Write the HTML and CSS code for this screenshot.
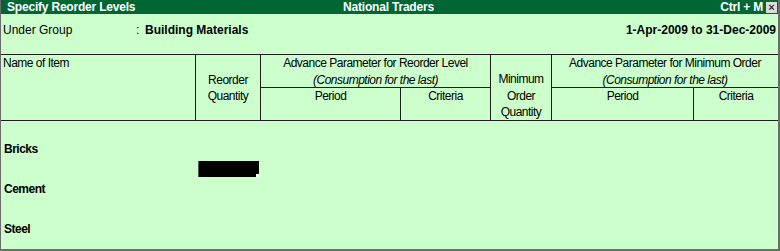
FILE: index.html
```html
<!DOCTYPE html>
<html>
<head>
<meta charset="utf-8">
<link rel="stylesheet" href="styles.css">
</head>
<body>
<div class="win">
  <div class="titlebar">
    <div class="t-left">Specify Reorder Levels</div>
    <div class="t-mid">National Traders</div>
    <div class="t-right"><span class="hotkey">Ctrl + M</span><span class="close">&#215;</span></div>
  </div>
  <div class="info">
    <div class="grp"><span class="lbl">Under Group</span><span class="colon">:</span><span class="val">Building Materials</span></div>
    <div class="period">1-Apr-2009 to 31-Dec-2009</div>
  </div>
  <div class="head">
    <div class="c name">Name of Item</div>
    <div class="c rq">Reorder<br>Quantity</div>
    <div class="c adv1">Advance Parameter for Reorder Level<br><i>(Consumption for the last)</i></div>
    <div class="c p1">Period</div>
    <div class="c cr1">Criteria</div>
    <div class="c moq">Minimum<br>Order<br>Quantity</div>
    <div class="c adv2">Advance Parameter for Minimum Order<br><i>(Consumption for the last)</i></div>
    <div class="c p2">Period</div>
    <div class="c cr2">Criteria</div>
  </div>
  <div class="body">
    <div class="item">
      <div class="iname">Bricks</div>
      <div class="fields"><div class="f-qty"><span class="field active"><span class="cursor"></span></span></div></div>
    </div>
    <div class="item">
      <div class="iname">Cement</div>
      <div class="fields"></div>
    </div>
    <div class="item">
      <div class="iname">Steel</div>
      <div class="fields"></div>
    </div>
  </div>
</div>
</body>
</html>
```
FILE: styles.css
```css
html, body {
  margin: 0;
  padding: 0;
  background: #ccffcc;
}
.win {
  width: 780px;
  height: 251px;
  box-sizing: border-box;
  border-left: 1px solid #6b6b6b;
  border-right: 2px solid #6b6b6b;
  border-bottom: 2px solid #6b6b6b;
  background: #ccffcc;
  font-family: "Liberation Sans", Arial, sans-serif;
  color: #000;
  overflow: hidden;
}
.titlebar {
  height: 14px;
  background: #006633;
  color: #fff;
  font-weight: bold;
  font-size: 12px;
  letter-spacing: -0.2px;
  line-height: 14px;
  display: grid;
  grid-template-columns: 1fr auto 1fr;
  align-items: center;
}
.t-left { padding-left: 6px; }
.t-mid { text-align: center; padding-right: 2px; }
.t-right {
  display: flex;
  justify-content: flex-end;
  align-items: center;
  gap: 3px;
}
.hotkey { font-weight: bold; }
.close {
  width: 11px;
  height: 11px;
  background: #dcdcdc;
  color: #333;
  font-size: 11px;
  line-height: 10px;
  text-align: center;
  font-weight: bold;
  margin-right: 1px;
  letter-spacing: 0;
}
.info {
  height: 40px;
  display: flex;
  justify-content: space-between;
  align-items: center;
  font-size: 12px;
  padding: 0 2px 8px 2px;
  box-sizing: border-box;
}
.grp { display: flex; align-items: center; }
.lbl { width: 133px; }
.colon { width: 9px; }
.val { font-weight: bold; }
.period { font-weight: bold; }
.head {
  display: grid;
  grid-template-columns: 194px 64px 139px 89px 60px 141px 84px;
  grid-template-rows: 32px 32px;
  gap: 1px;
  background: #1e1e1e;
  border-top: 1px solid #1e1e1e;
  border-bottom: 1px solid #1e1e1e;
  font-size: 12px;
  letter-spacing: -0.5px;
  line-height: 16.5px;
}
.c {
  background: #ccffcc;
  text-align: center;
  overflow: visible;
  white-space: nowrap;
}
.c i { font-style: italic; }
.name { grid-column: 1; grid-row: 1 / 3; text-align: left; padding-left: 2px; }
.rq { grid-column: 2; grid-row: 1 / 3; padding-top: 16.5px; }
.adv1 { grid-column: 3 / 5; grid-row: 1; }
.p1 { grid-column: 3; grid-row: 2; }
.cr1 { grid-column: 4; grid-row: 2; }
.moq { grid-column: 5; grid-row: 1 / 3; padding-top: 16px; }
.adv2 { grid-column: 6 / 8; grid-row: 1; }
.p2 { grid-column: 6; grid-row: 2; }
.cr2 { grid-column: 7; grid-row: 2; }
.body {
  padding-top: 20px;
  font-size: 12px;
  letter-spacing: -0.5px;
}
.item {
  display: flex;
  flex-direction: column;
  gap: 4px;
  padding-bottom: 4px;
}
.iname {
  height: 16px;
  line-height: 16px;
  font-weight: bold;
  padding-left: 3px;
}
.fields {
  height: 16px;
  display: flex;
  padding-left: 197px;
}
.f-qty { width: 61px; }
.field {
  display: block;
  position: relative;
  width: 61px;
  height: 16px;
}
.field.active {
  background: #000;
  border-left: 1px solid #555;
  box-sizing: border-box;
}
.cursor {
  position: absolute;
  right: 0;
  bottom: 0;
  width: 3px;
  height: 3px;
  background: #fff;
}
```
